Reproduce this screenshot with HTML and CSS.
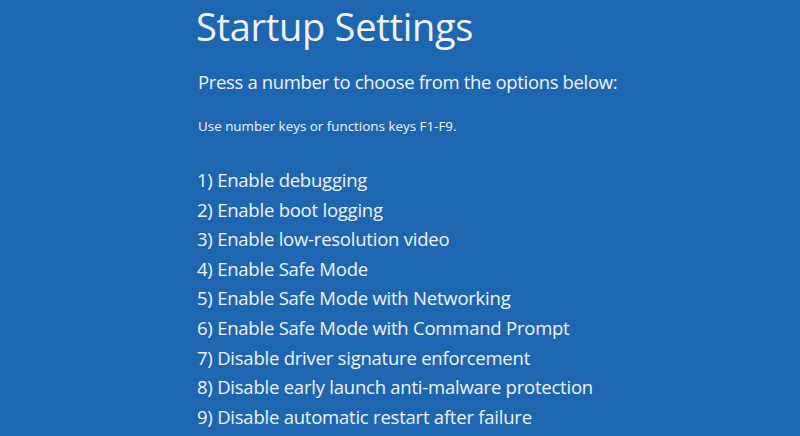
FILE: index.html
```html
<!DOCTYPE html>
<html>
<head>
<meta charset="utf-8">
<link rel="stylesheet" href="styles.css">
</head>
<body>
<main class="screen">
  <h1 class="title">Startup Settings</h1>
  <p class="lead">Press a number to choose from the options below:</p>
  <p class="hint">Use number keys or functions keys F1-F9.</p>
  <ol class="options">
    <li>1) Enable debugging</li>
    <li>2) Enable boot logging</li>
    <li>3) Enable low-resolution video</li>
    <li>4) Enable Safe Mode</li>
    <li>5) Enable Safe Mode with Networking</li>
    <li>6) Enable Safe Mode with Command Prompt</li>
    <li>7) Disable driver signature enforcement</li>
    <li>8) Disable early launch anti-malware protection</li>
    <li>9) Disable automatic restart after failure</li>
  </ol>
</main>
</body>
</html>
```

FILE: styles.css
```css
html, body {
  margin: 0;
  padding: 0;
  background: #1f66b0;
}
.screen {
  width: 800px;
  height: 436px;
  overflow: hidden;
  box-sizing: border-box;
  padding: 2px 0 0 196px;
  color: #eef3fa;
  font-family: "Open Sans", "Noto Sans", sans-serif;
  display: flex;
  flex-direction: column;
}
.title {
  margin: 0;
  font-size: 38px;
  font-weight: 400;
  line-height: 48px;
  letter-spacing: -0.3px;
}
.lead {
  margin: 19px 0 0 2px;
  font-size: 18.5px;
  line-height: 26px;
  letter-spacing: -0.35px;
}
.hint {
  margin: 22px 0 0 2px;
  font-size: 13.4px;
  line-height: 18px;
}
.options {
  list-style: none;
  margin: 30px 0 0 1px;
  padding: 0;
  font-size: 18.5px;
  line-height: 29.6px;
  letter-spacing: -0.23px;
}
```
